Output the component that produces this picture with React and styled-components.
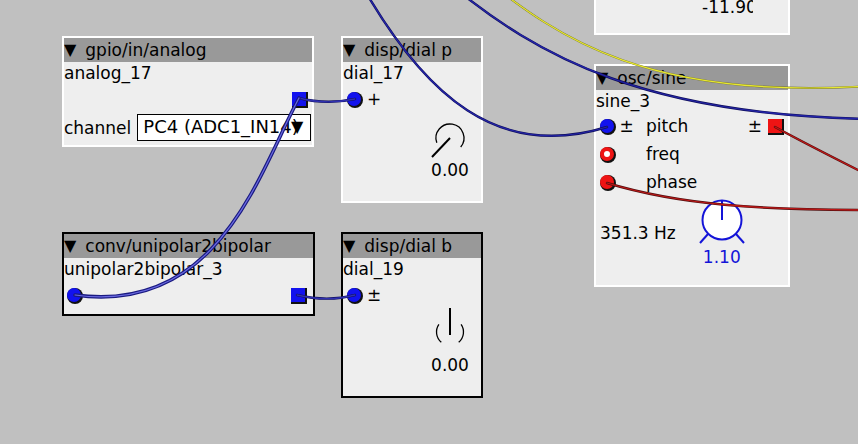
import React from 'react'
import styled, { createGlobalStyle } from 'styled-components'

const GlobalStyle = createGlobalStyle`
  html, body {
    margin: 0;
    padding: 0;
    background: #c0c0c0;
  }
`

const BLUE = '#1212ee'
const RED = '#ee1414'

const Canvas = styled.div`
  position: relative;
  width: 858px;
  height: 444px;
  overflow: hidden;
  background: #c0c0c0;
  font-family: 'DejaVu Sans', 'Liberation Sans', sans-serif;
  font-size: 17px;
  color: #000;
`

const Node = styled.div`
  position: absolute;
  left: ${(p) => p.x}px;
  top: ${(p) => p.y}px;
  width: ${(p) => p.w}px;
  height: ${(p) => p.h}px;
  box-sizing: border-box;
  border: 2px solid ${(p) => (p.selected ? '#000' : '#fff')};
  background: #eeeeee;
  display: flex;
  flex-direction: column;
`

const Title = styled.div`
  flex: none;
  height: 24px;
  line-height: 24px;
  background: #999999;
  display: flex;
  align-items: center;
  white-space: nowrap;
  overflow: hidden;
`

const Caret = styled.span`
  font-size: 16px;
  margin: 0 9px 0 0;
`

const InstName = styled.div`
  flex: none;
  height: 22px;
  line-height: 22px;
  white-space: nowrap;
`

const PortRow = styled.div`
  flex: none;
  display: flex;
  align-items: center;
  height: ${(p) => p.h || 22}px;
  margin-top: ${(p) => p.mt || 0}px;
  padding: 0 ${(p) => p.pr || 0}px 0 ${(p) => p.pl || 0}px;
`

const Inlet = styled.div`
  flex: none;
  width: 14px;
  height: 14px;
  box-sizing: border-box;
  border-radius: 50%;
  background: ${(p) => (p.ring ? '#fff' : p.color)};
  border: ${(p) => (p.ring ? `4px solid ${p.color}` : 'none')};
  box-shadow: 1px 1px 0 1px #111;
`

const Outlet = styled.div`
  flex: none;
  width: 14px;
  height: 14px;
  margin-left: ${(p) => (p.auto ? 'auto' : '0')};
  background: ${(p) => p.color};
  box-shadow: 1px 1px 0 1px #111;
`

const Sym = styled.span`
  flex: none;
  width: ${(p) => p.w || 'auto'};
  margin-left: ${(p) => p.ml || 0}px;
  margin-right: ${(p) => p.mr || 0}px;
  line-height: 22px;
`

const PushSym = styled(Sym)`
  margin-left: auto;
`

const Label = styled.span`
  line-height: 22px;
  white-space: nowrap;
`

const ChannelRow = styled.div`
  flex: none;
  display: flex;
  align-items: center;
  height: 27px;
  margin-top: 4px;
`

const Dropdown = styled.div`
  position: relative;
  flex: none;
  width: 174px;
  height: 27px;
  margin-left: 6px;
  box-sizing: border-box;
  border: 1.5px solid #000;
  background: #fff;
  font-size: 18px;
  line-height: 24px;
  padding-left: 5px;
  white-space: nowrap;
  overflow: hidden;
`

const DropArrow = styled.span`
  position: absolute;
  right: 7px;
  top: 0;
  font-size: 16px;
  line-height: 24px;
`

const DialBox = styled.div`
  flex: none;
  width: 40px;
  margin-left: 87px;
  margin-top: ${(p) => p.mt}px;
  display: flex;
  flex-direction: column;
  align-items: center;
  svg {
    display: block;
    overflow: visible;
  }
`

const DialValue = styled.div`
  margin-top: ${(p) => p.mt}px;
  line-height: 18px;
  white-space: nowrap;
  color: ${(p) => p.color || '#000'};
`

const FootRow = styled.div`
  flex: none;
  display: flex;
  align-items: flex-start;
  padding-left: 4px;
`

const Freq = styled.div`
  margin-top: 27px;
  line-height: 20px;
  white-space: nowrap;
`

const KnobCol = styled.div`
  margin-left: 22px;
  margin-top: 2px;
  display: flex;
  flex-direction: column;
  align-items: center;
  width: 48px;
  svg {
    display: block;
  }
`

const Readout = styled.div`
  margin: 55px 0 0 106px;
  width: 51px;
  line-height: 20px;
  overflow: hidden;
  white-space: nowrap;
`

const WireLayer = styled.svg`
  position: absolute;
  left: 0;
  top: 0;
  width: 858px;
  height: 444px;
  pointer-events: none;
  overflow: hidden;
`

const Wire = ({ d, core, shade, w = 1.3, sw = 2.4 }) => (
  <g fill="none" strokeLinecap="round">
    <path d={d} stroke={shade} strokeWidth={sw} />
    <path d={d} stroke={core} strokeWidth={w} />
  </g>
)

const UnipolarDial = () => (
  <svg width="40" height="40" viewBox="0 0 40 40">
    <path d="M6.8,24.8 A14,14 0 1 1 30.7,29" fill="none" stroke="#000" strokeWidth="1.3" />
    <line x1="20" y1="20" x2="2" y2="39" stroke="#000" strokeWidth="2" />
  </svg>
)

const BipolarDial = () => (
  <svg width="40" height="44" viewBox="0 0 40 44">
    <path d="M8.9,16.3 A13.5,13.5 0 0 0 11.3,34.3" fill="none" stroke="#000" strokeWidth="1.3" />
    <path d="M31.1,16.3 A13.5,13.5 0 0 1 28.7,34.3" fill="none" stroke="#000" strokeWidth="1.3" />
    <line x1="20" y1="0" x2="20" y2="27" stroke="#000" strokeWidth="2" />
  </svg>
)

const PitchKnob = () => (
  <svg width="48" height="48" viewBox="0 0 48 48">
    <circle cx="24" cy="22" r="19.5" fill="#fff" stroke="#1414d8" strokeWidth="2" />
    <line x1="24" y1="3" x2="24" y2="22" stroke="#1414d8" strokeWidth="2" />
    <line x1="10" y1="36" x2="2" y2="45" stroke="#1414d8" strokeWidth="2" />
    <line x1="38" y1="36" x2="46" y2="45" stroke="#1414d8" strokeWidth="2" />
  </svg>
)

export default function App() {
  return (
    <>
      <GlobalStyle />
      <Canvas>
        <Node x={594} y={-60} w={196} h={95}>
          <Readout>-11.90</Readout>
        </Node>

        <Node x={62} y={36} w={252} h={111}>
          <Title><Caret>▼</Caret>gpio/in/analog</Title>
          <InstName>analog_17</InstName>
          <PortRow mt={4} pr={6}>
            <Outlet auto color={BLUE} />
          </PortRow>
          <ChannelRow>
            <Label>channel</Label>
            <Dropdown>
              PC4 (ADC1_IN14)
              <DropArrow>▼</DropArrow>
            </Dropdown>
          </ChannelRow>
        </Node>

        <Node x={341} y={36} w={142} h={167}>
          <Title><Caret>▼</Caret>disp/dial p</Title>
          <InstName>dial_17</InstName>
          <PortRow mt={4} pl={4}>
            <Inlet color={BLUE} />
            <Sym ml={6}>+</Sym>
          </PortRow>
          <DialBox mt={8}>
            <UnipolarDial />
            <DialValue mt={3}>0.00</DialValue>
          </DialBox>
        </Node>

        <Node x={62} y={232} w={253} h={84} selected>
          <Title><Caret>▼</Caret>conv/unipolar2bipolar</Title>
          <InstName>unipolar2bipolar_3</InstName>
          <PortRow mt={4} pl={3} pr={8}>
            <Inlet color={BLUE} />
            <Outlet auto color={BLUE} />
          </PortRow>
        </Node>

        <Node x={341} y={232} w={142} h={166} selected>
          <Title><Caret>▼</Caret>disp/dial b</Title>
          <InstName>dial_19</InstName>
          <PortRow mt={4} pl={4}>
            <Inlet color={BLUE} />
            <Sym ml={6}>±</Sym>
          </PortRow>
          <DialBox mt={2}>
            <BipolarDial />
            <DialValue mt={4}>0.00</DialValue>
          </DialBox>
        </Node>

        <Node x={594} y={64} w={196} h={223}>
          <Title><Caret>▼</Caret>osc/sine</Title>
          <InstName>sine_3</InstName>
          <PortRow h={28} pl={4} pr={6}>
            <Inlet color={BLUE} />
            <Sym w="32px" ml={0}>&nbsp;±</Sym>
            <Label>pitch</Label>
            <PushSym mr={6}>±</PushSym>
            <Outlet color={RED} />
          </PortRow>
          <PortRow h={28} pl={4}>
            <Inlet ring color={RED} />
            <Sym w="32px" />
            <Label>freq</Label>
          </PortRow>
          <PortRow h={28} pl={4}>
            <Inlet color={RED} />
            <Sym w="32px" />
            <Label>phase</Label>
          </PortRow>
          <FootRow>
            <Freq>351.3 Hz</Freq>
            <KnobCol>
              <PitchKnob />
              <DialValue mt={2} color="#1414d8">1.10</DialValue>
            </KnobCol>
          </FootRow>
        </Node>

        <WireLayer viewBox="0 0 858 444">
          <Wire d="M480,-25 C560,40 650,100 870,86" core="#e8e830" shade="#74742c" w={1.2} sw={2} />
          <Wire d="M445,-20 C540,60 650,115 870,119" core="#2424a8" shade="#10105c" />
          <Wire d="M356,-25 C425,100 500,160 607,127" core="#2424a8" shade="#10105c" />
          <Wire d="M299,98 C318,103 336,103 355,99" core="#3030b0" shade="#10105c" />
          <Wire d="M297,295 C318,300 336,300 355,295" core="#3030b0" shade="#10105c" />
          <Wire d="M299,98 C260,170 220,315 75,295" core="#6a6ae0" shade="#1a1a80" w={1.2} sw={3.6} />
          <Wire d="M775,127 Q810,146 870,176" core="#c01818" shade="#501010" />
          <Wire d="M607,183 C680,205 760,210 870,210" core="#c01818" shade="#501010" />
        </WireLayer>
      </Canvas>
    </>
  )
}
